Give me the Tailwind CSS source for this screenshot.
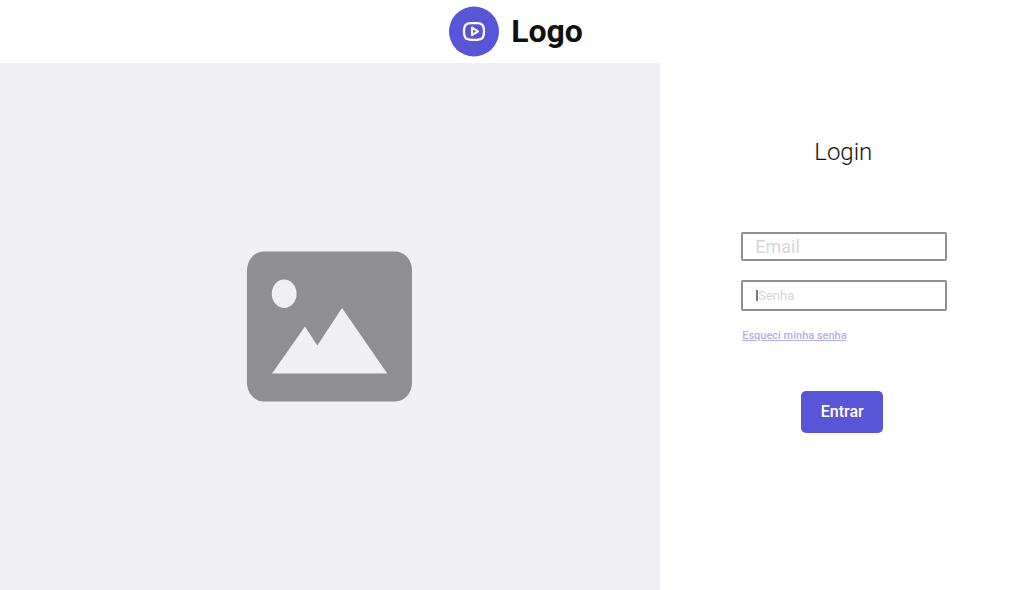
<!DOCTYPE html>
<html lang="pt-BR">
<head>
<meta charset="utf-8">
<meta name="viewport" content="width=device-width, initial-scale=1">
<title>Login</title>
<script src="https://cdn.jsdelivr.net/npm/@tailwindcss/browser@4"></script>
</head>
<body class="flex min-h-screen flex-col bg-white font-['Roboto',sans-serif] text-[#111111]">
  <header class="flex items-center justify-center gap-3 pt-1.5 pb-1.5">
    <svg class="h-[51px] w-[50px]" viewBox="0 0 50 51" fill="none" aria-hidden="true">
      <circle cx="25" cy="25.500" r="25" fill="#5856d6"/>
      <path d="M15 25.500c0-6.500 1.800-8.300 7.500-8.300h5c5.700 0 7.500 1.800 7.500 8.300s-1.800 8.300-7.500 8.300h-5c-5.700 0-7.500-1.800-7.500-8.300Z" stroke="#fff" stroke-width="2.200"/>
      <path d="M23 21.600v7.600l6-3.800Z" stroke="#fff" stroke-width="2" stroke-linejoin="round"/>
    </svg>
    <span class="pb-px text-[32px] leading-10 font-bold">Logo</span>
  </header>
  <main class="flex flex-1">
    <div class="flex w-[64%] items-center justify-center bg-[#efeff4]">
      <svg class="h-[151px] w-[166px]" viewBox="0 0 166 151" role="img" aria-label="Imagem">
        <path d="M17 .5H148C157.500 .5 165 9 165 19.500V131.500C165 142 157.500 150.500 148 150.500H17C7.500 150.500 0 142 0 131.500V19.500C0 9 7.500 .5 17 .5Z" fill="#8e8e93"/>
        <ellipse cx="37.200" cy="42.700" rx="12.400" ry="14.200" fill="#efeff4"/>
        <path d="M25 122.500 58 75.500 70.300 94.500 95 57 140.300 122.500Z" fill="#efeff4"/>
      </svg>
    </div>
    <section class="flex flex-1 flex-col items-center pt-[73px] pr-1">
      <h1 class="pr-0.5 text-2xl leading-8 font-light">Login</h1>
      <form class="mt-16 flex w-[206px] flex-col">
        <input type="email" aria-label="Email" placeholder="Email" class="h-[29px] w-full rounded-xs border-2 border-[#8e8e93] px-3 text-lg leading-6 outline-none placeholder:text-[#d5d5d8]">
        <div class="relative mt-[19px]">
          <input type="password" aria-label="Senha" placeholder="Senha" class="block h-[31px] w-full rounded-xs border-2 border-[#8e8e93] px-[15px] text-[13px] leading-5 outline-none placeholder:text-[#d5d5d8]">
          <span class="absolute top-2.5 left-[15px] h-[11px] w-0.5 bg-[#77777a]" aria-hidden="true"></span>
        </div>
        <a href="#" class="mt-[17px] ml-px self-start text-[11px] leading-4 font-medium text-[#b1afea] underline">Esqueci minha senha</a>
        <button type="submit" class="mt-[47px] mr-1 h-[42px] w-[82px] self-center rounded-[5px] bg-[#5856d6] text-base font-medium text-white">Entrar</button>
      </form>
    </section>
  </main>
</body>
</html>
